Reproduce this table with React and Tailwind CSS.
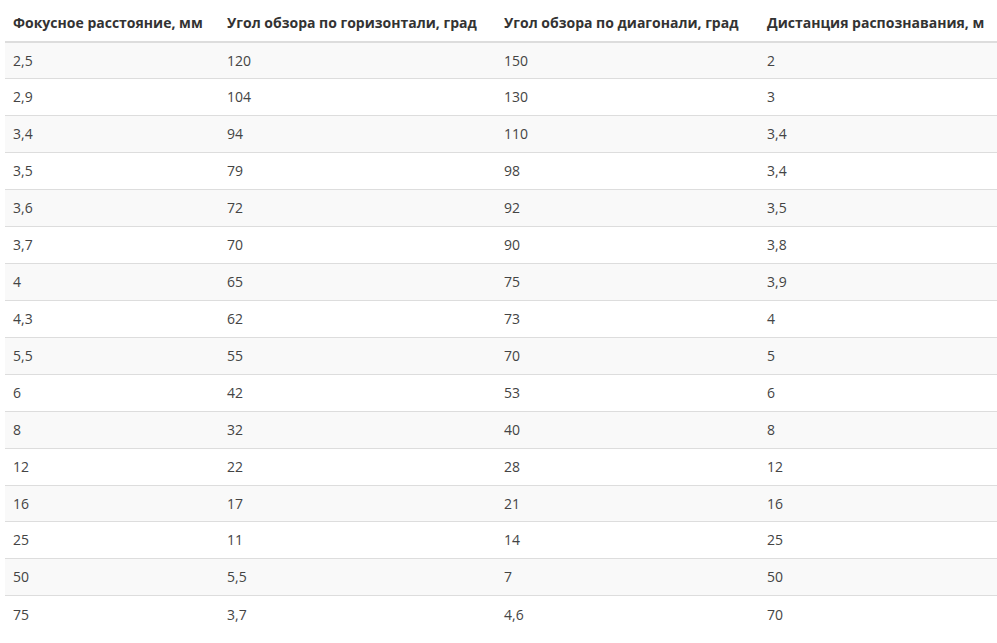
const rows = [
  ['2,5', '120', '150', '2'],
  ['2,9', '104', '130', '3'],
  ['3,4', '94', '110', '3,4'],
  ['3,5', '79', '98', '3,4'],
  ['3,6', '72', '92', '3,5'],
  ['3,7', '70', '90', '3,8'],
  ['4', '65', '75', '3,9'],
  ['4,3', '62', '73', '4'],
  ['5,5', '55', '70', '5'],
  ['6', '42', '53', '6'],
  ['8', '32', '40', '8'],
  ['12', '22', '28', '12'],
  ['16', '17', '21', '16'],
  ['25', '11', '14', '25'],
  ['50', '5,5', '7', '50'],
  ['75', '3,7', '4,6', '70'],
];

const headers = [
  'Фокусное расстояние, мм',
  'Угол обзора по горизонтали, град',
  'Угол обзора по диагонали, град',
  'Дистанция распознавания, м',
];

export default function App() {
  return (
    <div className="min-h-[643px] bg-white pl-[5px] pt-[5px] font-['Open_Sans',sans-serif] text-[14px] leading-[20px] text-[#333]">
      <table className="w-[992px] table-fixed border-collapse">
        <colgroup>
          <col className="w-[214px]" />
          <col className="w-[277px]" />
          <col className="w-[263px]" />
          <col />
        </colgroup>
        <thead>
          <tr>
            {headers.map((h) => (
              <th key={h} className="whitespace-nowrap border-b-2 border-[#ddd] p-2 text-left font-bold">
                {h}
              </th>
            ))}
          </tr>
        </thead>
        <tbody>
          {rows.map((r, i) => (
            <tr key={i} className={i % 2 === 0 ? 'bg-[#f9f9f9]' : 'bg-white'}>
              {r.map((c, j) => (
                <td key={j} className="h-[36.93px] border-t border-[#ddd] px-2 py-0 leading-[19.93px] text-[#444]">
                  {c}
                </td>
              ))}
            </tr>
          ))}
        </tbody>
      </table>
    </div>
  );
}
